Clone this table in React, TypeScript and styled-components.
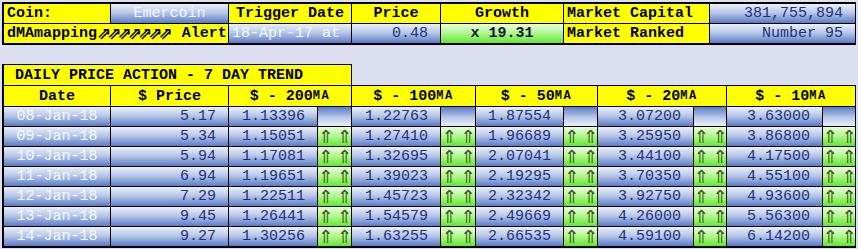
import styled, { createGlobalStyle, css } from "styled-components";

type Tone = "yellow" | "blue" | "blueFlip" | "green";
type Align = "left" | "center" | "right";

interface Row {
  date: string;
  price: string;
  ma: string[];
}

const rows: Row[] = [
  { date: "08-Jan-18", price: "5.17", ma: ["1.13396", "1.22763", "1.87554", "3.07200", "3.63000"] },
  { date: "09-Jan-18", price: "5.34", ma: ["1.15051", "1.27410", "1.96689", "3.25950", "3.86800"] },
  { date: "10-Jan-18", price: "5.94", ma: ["1.17081", "1.32695", "2.07041", "3.44100", "4.17500"] },
  { date: "11-Jan-18", price: "6.94", ma: ["1.19651", "1.39023", "2.19295", "3.70350", "4.55100"] },
  { date: "12-Jan-18", price: "7.29", ma: ["1.22511", "1.45723", "2.32342", "3.92750", "4.93600"] },
  { date: "13-Jan-18", price: "9.45", ma: ["1.26441", "1.54579", "2.49669", "4.26000", "5.56300"] },
  { date: "14-Jan-18", price: "9.27", ma: ["1.30256", "1.63255", "2.66535", "4.59100", "6.14200"] },
];

const maLabels = ["200", "100", "50", "20", "10"];

const App = () => {
  return (
    <>
      <GlobalStyle />
      <S_SummaryGrid>
        <S_Cell $tone="yellow" $align="left" $bold>Coin:</S_Cell>
        <S_Cell $tone="blue" $light>Emercoin</S_Cell>
        <S_Cell $tone="yellow" $bold>Trigger Date</S_Cell>
        <S_Cell $tone="yellow" $bold>Price</S_Cell>
        <S_Cell $tone="yellow" $bold>Growth</S_Cell>
        <S_Cell $tone="yellow" $align="left" $bold>Market Capital</S_Cell>
        <S_Cell $tone="blue" $align="right">381,755,894</S_Cell>

        <S_WideCell $tone="yellow" $align="left" $bold>
          dMAmapping<S_Surge>⇗⇗⇗⇗⇗⇗⇗</S_Surge> Alert
        </S_WideCell>
        <S_Cell $tone="blue" $align="left" $light>18-Apr-17 at</S_Cell>
        <S_Cell $tone="blue" $align="right">0.48</S_Cell>
        <S_Cell $tone="green" $bold $dark>x 19.31</S_Cell>
        <S_Cell $tone="yellow" $align="left" $bold>Market Ranked</S_Cell>
        <S_Cell $tone="blue" $align="right">Number 95</S_Cell>
      </S_SummaryGrid>

      <S_TrendTitle>DAILY PRICE ACTION - 7 DAY TREND</S_TrendTitle>
      <S_TrendGrid>
        <S_Cell $tone="yellow" $bold>Date</S_Cell>
        <S_Cell $tone="yellow" $bold>$ Price</S_Cell>
        {maLabels.map((label) => (
          <S_WideCell key={label} $tone="yellow" $bold>
            $ - {label}
            <S_Ma>MA</S_Ma>
          </S_WideCell>
        ))}

        {rows.map((row, i) => (
          <S_RowGroup key={row.date}>
            <S_Cell $tone="blue" $light>{row.date}</S_Cell>
            <S_Cell $tone="blue" $align="right">{row.price}</S_Cell>
            {row.ma.map((value, j) => (
              <S_RowGroup key={j}>
                <S_Cell $tone="blue" $align="right">{value}</S_Cell>
                {i === 0 ? (
                  <S_Cell $tone="blueFlip" />
                ) : (
                  <S_Cell $tone="green">
                    <S_Arrows>⇑ ⇑</S_Arrows>
                  </S_Cell>
                )}
              </S_RowGroup>
            ))}
          </S_RowGroup>
        ))}
      </S_TrendGrid>
    </>
  );
};

export default App;

const GlobalStyle = createGlobalStyle`
  body {
    margin: 2px;
    background: #dce0f1;
    font-family: "Liberation Mono", "DejaVu Sans Mono", monospace;
    font-size: 15px;
  }
`;

const tones = {
  yellow: css`
    background: #ffff00;
  `,
  blue: css`
    background: linear-gradient(to bottom, #eaeff9 0%, #b9c8e9 45%, #5b7bc6 100%);
  `,
  blueFlip: css`
    background: linear-gradient(to bottom, #5b7bc6 0%, #b9c8e9 55%, #eaeff9 100%);
  `,
  green: css`
    background: linear-gradient(to bottom, #ecffe2 0%, #aef58a 50%, #5fe832 100%);
  `,
};

const S_SummaryGrid = styled.div`
  display: grid;
  grid-template-columns: 106px 117px 122px 88px 122px 145px 145px;
  grid-auto-rows: 19px;
  gap: 1px;
  width: max-content;
  background: #000;
  border: 2px solid #000;
`;

const S_TrendTitle = styled.div`
  height: 20px;
  margin-top: 19px;
  padding-left: 11px;
  width: 336px;
  display: flex;
  align-items: center;
  background: #ffff00;
  border: 1px solid #000;
  border-left-width: 2px;
  border-bottom: none;
  font-weight: bold;
  white-space: pre;
`;

const S_TrendGrid = styled.div`
  display: grid;
  grid-template-columns: 106px 117px 88px 33px 88px 34px 87px 33px 95px 32px 95px 32px;
  grid-template-rows: 20px;
  grid-auto-rows: 19px;
  gap: 1px;
  width: max-content;
  background: #000;
  border: 2px solid #000;
  border-top-width: 1px;
`;

const S_RowGroup = styled.div`
  display: contents;
`;

const S_Cell = styled.div<{
  $tone: Tone;
  $align?: Align;
  $bold?: boolean;
  $light?: boolean;
  $dark?: boolean;
}>`
  ${(p) => tones[p.$tone]};
  display: flex;
  align-items: center;
  justify-content: ${(p) =>
    p.$align === "left" ? "flex-start" : p.$align === "right" ? "flex-end" : "center"};
  padding: ${(p) => (p.$align === "left" ? "0 0 0 3px" : p.$align === "right" ? "0 12px 0 0" : "0")};
  overflow: hidden;
  white-space: pre;
  font-weight: ${(p) => (p.$bold ? "bold" : "normal")};
  color: ${(p) =>
    p.$tone === "yellow" ? "#000" : p.$light ? "#f4f7ff" : p.$dark ? "#14183a" : "#22307c"};
`;

const S_WideCell = styled(S_Cell)`
  grid-column: span 2;
`;

const S_Surge = styled.span`
  font-family: "DejaVu Sans", sans-serif;
  font-size: 17px;
  letter-spacing: -4px;
  padding-right: 4px;
  line-height: 1;
`;

const S_Ma = styled.span`
  font-size: 12px;
  letter-spacing: 1.5px;
`;

const S_Arrows = styled.span`
  font-family: "DejaVu Sans", sans-serif;
  font-size: 18px;
  letter-spacing: -1px;
  color: #3c5a14;
  line-height: 1;
`;
